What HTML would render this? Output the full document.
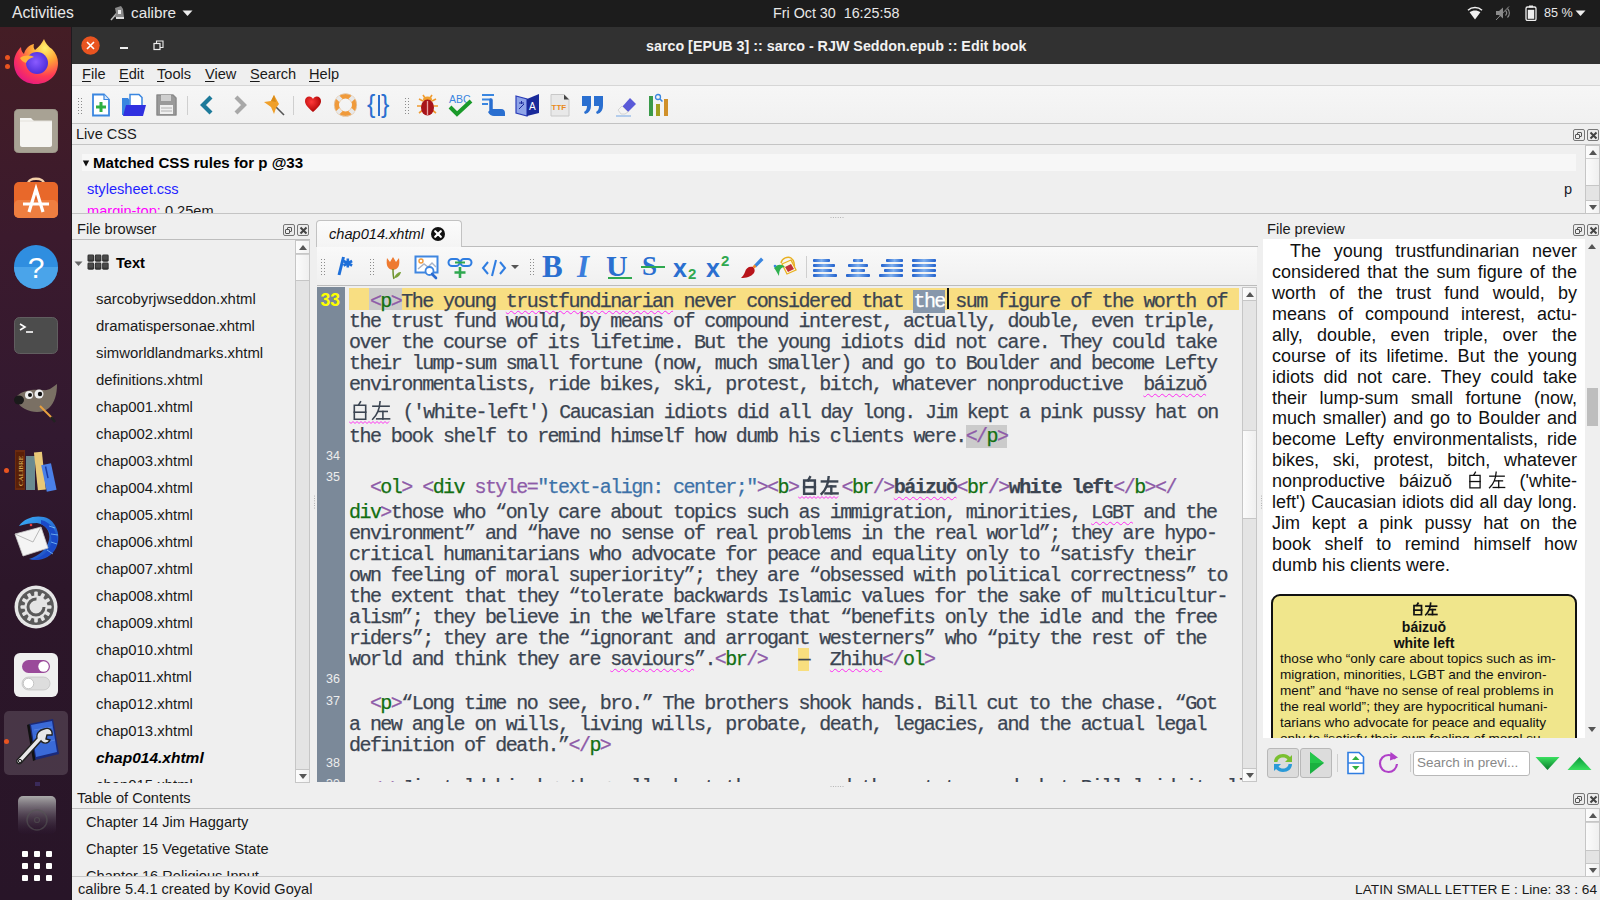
<!DOCTYPE html>
<html><head><meta charset="utf-8">
<style>
*{margin:0;padding:0;box-sizing:border-box}
html,body{width:1600px;height:900px;overflow:hidden;background:#efefef;font-family:"Liberation Sans",sans-serif;color:#1a1a1a}
.a{position:absolute}
.t{position:absolute;white-space:pre;line-height:1}
#topbar{left:0;top:0;width:1600px;height:27px;background:#1c1c1c;color:#e8e8e8}
#dock{left:0;top:27px;width:72px;height:873px;background:linear-gradient(180deg,#441d25 0%,#3b1a2d 24%,#321930 47%,#2c1629 64%,#281528 100%);border-right:1px solid #1f1a1f}
#title{left:72px;top:27px;width:1528px;height:37px;background:#313131;color:#f2f2f2}
#menu{left:72px;top:64px;width:1528px;height:21px;background:#efefef;font-size:14.6px}
#tb{left:72px;top:85px;width:1528px;height:39px;background:linear-gradient(#f6f6f6,#f1f1f1);border-top:1px solid #d6d6d6;border-bottom:1px solid #c2c2c2}
.ui{font-size:14.6px;color:#1a1a1a}
.fl{font-size:14.9px}
.hline{position:absolute;height:1px;background:#c4c4c4}
.vline{position:absolute;width:1px;background:#c4c4c4}
.mono{font-family:"Liberation Mono",monospace}
.vs{background:#e4e4e4;border:1px solid #c6c6c6}
.vsb{background:linear-gradient(90deg,#fdfdfd,#f1f1f1);border-bottom:1px solid #c6c6c6}
.vsb+.vsl{}
.vsl{background:linear-gradient(90deg,#fbfbfb,#efefef);border-top:1px solid #d0d0d0;border-bottom:1px solid #c6c6c6}
.tri{position:absolute;left:2.5px;width:0;height:0;border-left:4px solid transparent;border-right:4px solid transparent}
.tri.up{top:4px;border-bottom:5px solid #555}
.tri.dn{top:4px;border-top:5px solid #555}
.dbtn{position:absolute;width:12px;height:12px;border:1px solid #777;border-radius:2px;background:#ececec}
.ed{font-size:20px;letter-spacing:-1.55px;-webkit-text-stroke-width:0.25px;color:#3b4451;line-height:21px}
.sel{background:#8797ab;color:#fff}
.cjk{font-family:"Liberation Sans",sans-serif}
.pv{font-family:"Liberation Sans",sans-serif}
</style></head><body>

<div id="topbar" class="a">
  <div class="t" style="left:12px;top:5px;font-size:15.7px">Activities</div>
  <div class="t" style="left:131px;top:5px;font-size:15.3px">calibre</div>
  <div class="t" style="left:773px;top:6px;font-size:14.3px">Fri Oct 30  16:25:58</div>
  <div class="t" style="left:1544px;top:7px;font-size:12.6px">85 %</div>
</div>
<div id="dock" class="a"></div>
<svg class="a" style="left:110px;top:5px" width="15" height="16" viewBox="0 0 15 16"><path d="M1 15 L7 8" stroke="#bbb" stroke-width="1.6"/><path d="M5 3 L11 1 L13 4 L14 12 L10 14 L5 12 L6 8Z" fill="#8a8a8a"/><path d="M8 5 h3 v4 h-3z" fill="#eee"/><path d="M6 12 h8 v2 h-8z" fill="#ddd"/></svg>
<svg class="a" style="left:182px;top:10px" width="11" height="7" viewBox="0 0 11 7"><path d="M0.5 0.5 H10.5 L5.5 6Z" fill="#eee"/></svg>
<svg class="a" style="left:1467px;top:6px" width="16" height="14" viewBox="0 0 16 14"><path d="M8 13.5 L2.6 6.2 C5.8 3.8 10.2 3.8 13.4 6.2Z" fill="#f0f0f0"/><path d="M1 4.2 C4.8 0.6 11.2 0.6 15 4.2" fill="none" stroke="#f0f0f0" stroke-width="1.5"/></svg>
<svg class="a" style="left:1495px;top:6px" width="16" height="14" viewBox="0 0 16 14"><path d="M1 5 H4 L8 1.5 V12.5 L4 9 H1Z" fill="#8a8a8a"/><path d="M10.5 4.5 C12 6 12 8 10.5 9.5 M12.5 2.5 C15 5 15 9 12.5 11.5" stroke="#8a8a8a" stroke-width="1.1" fill="none"/><path d="M1 14 L14 0.5" stroke="#8a8a8a" stroke-width="1"/></svg>
<svg class="a" style="left:1525px;top:5px" width="12" height="16" viewBox="0 0 12 16"><rect x="4" y="0.5" width="4" height="2" fill="#eee"/><rect x="1" y="2" width="10" height="13.5" rx="1.5" fill="none" stroke="#eee" stroke-width="1.3"/><rect x="2.8" y="4.8" width="6.4" height="9" fill="#eee"/></svg>
<svg class="a" style="left:1575px;top:10px" width="11" height="7" viewBox="0 0 11 7"><path d="M0.5 0.5 H10.5 L5.5 6Z" fill="#eee"/></svg>
<svg class="a" style="left:12px;top:38px" width="48" height="48" viewBox="0 0 48 48"><defs><radialGradient id="ff1" cx="0.7" cy="0.2" r="0.9"><stop offset="0" stop-color="#fff36e"/><stop offset="0.35" stop-color="#ffa436"/><stop offset="0.7" stop-color="#ff3a55"/><stop offset="1" stop-color="#e31587"/></radialGradient><radialGradient id="ff2" cx="0.45" cy="0.45" r="0.6"><stop offset="0" stop-color="#8a5bff"/><stop offset="1" stop-color="#4a2ad8"/></radialGradient></defs>
<path d="M24 46 C11 46 2 37 2 25 C2 18 5 13 9 9 C9 13 11 15 12 16 C13 11 17 7 22 6 C21 9 22 11 23 12 C27 9 30 5 32 1 C34 6 36 8 40 11 C44 15 46 20 46 25 C46 37 37 46 24 46Z" fill="url(#ff1)"/>
<circle cx="25" cy="25" r="11" fill="url(#ff2)"/>
<path d="M8 20 C12 17 18 17 22 19 C18 20 15 22 14 25 C11 24 9 22 8 20Z" fill="#ffb03a"/></svg>
<div class="a" style="left:5px;top:55px;width:5px;height:5px;border-radius:50%;background:#e95420"></div>
<div class="a" style="left:5px;top:64px;width:5px;height:5px;border-radius:50%;background:#e95420"></div>
<svg class="a" style="left:14px;top:109px" width="44" height="44" viewBox="0 0 44 44"><rect x="0" y="0" width="44" height="44" rx="5" fill="#a8a294"/><rect x="0" y="0" width="44" height="44" rx="5" fill="none" stroke="#8f8a7e" stroke-width="0.8"/><path d="M6 9 H17 L20 12 H38 V36 C38 37 37 38 36 38 H8 C7 38 6 37 6 36Z" fill="#f6f5f2"/><path d="M6 12 H38" stroke="#e4e2dc" stroke-width="1"/></svg>
<svg class="a" style="left:14px;top:174px" width="44" height="44" viewBox="0 0 44 44"><path d="M14 10 C14 3 30 3 30 10" fill="none" stroke="#f4d0a8" stroke-width="2.5"/><rect x="0" y="8" width="44" height="36" rx="5" fill="#e8682a"/><rect x="0" y="26" width="44" height="18" rx="5" fill="#ee7e40"/><path d="M15 38 L22 15 L29 38" fill="none" stroke="#fff" stroke-width="3.2"/><path d="M9 30 H35" stroke="#fff" stroke-width="3"/></svg>
<svg class="a" style="left:14px;top:245px" width="44" height="44" viewBox="0 0 44 44"><circle cx="22" cy="22" r="22" fill="#2f8ee0"/><path d="M0 22 A22 22 0 0 0 44 22Z" fill="#4aa4ea"/><text x="22" y="33" text-anchor="middle" font-family="Liberation Sans" font-size="30" fill="#fff">?</text></svg>
<svg class="a" style="left:14px;top:317px" width="44" height="37" viewBox="0 0 44 37"><rect x="0.5" y="0.5" width="43" height="36" rx="5" fill="#4c4c4c" stroke="#6a6a6a" stroke-width="0.8"/><path d="M6 7 L11 10 L6 13" fill="none" stroke="#fff" stroke-width="1.6"/><path d="M12 15 H19" stroke="#fff" stroke-width="1.6"/></svg>
<svg class="a" style="left:13px;top:382px" width="46" height="42" viewBox="0 0 46 42"><path d="M4 14 C10 8 20 7 30 8 C36 9 40 5 44 2 C44 12 42 20 36 26 C30 31 20 31 12 27 C6 24 3 19 4 14Z" fill="#7a7064"/><ellipse cx="6" cy="18" rx="5" ry="4.5" fill="#1a1a1a"/><circle cx="16" cy="13" r="4" fill="#eee"/><circle cx="26" cy="12" r="4.5" fill="#eee"/><circle cx="17" cy="13" r="2" fill="#111"/><circle cx="27" cy="12" r="2.2" fill="#111"/><path d="M27 24 L39 36" stroke="#e8a040" stroke-width="2"/><path d="M38 35 L42 40" stroke="#222" stroke-width="2.5"/></svg>
<svg class="a" style="left:14px;top:448px" width="46" height="46" viewBox="0 0 46 46"><rect x="1" y="2" width="10" height="40" fill="#6a2a10"/><rect x="2" y="4" width="8" height="36" fill="#5a2008"/><text x="8.5" y="38" transform="rotate(-90 8.5 38)" font-family="Liberation Serif" font-size="7" fill="#e8c060">CALIBRE</text><rect x="12" y="8" width="9" height="34" fill="#6a8a90"/><rect x="22" y="4" width="8" height="38" fill="#e8c878" transform="rotate(-6 26 24)"/><rect x="30" y="16" width="10" height="27" fill="#4a80e8" transform="rotate(-12 35 30)"/><path d="M34 18 V30" stroke="#1a3aa0" stroke-width="1.5" transform="rotate(-12 35 30)"/></svg>
<div class="a" style="left:4px;top:468px;width:5px;height:5px;border-radius:50%;background:#e95420"></div>
<svg class="a" style="left:11px;top:514px" width="50" height="50" viewBox="0 0 50 50"><defs><linearGradient id="tb1" x1="0" y1="0" x2="1" y2="1"><stop offset="0" stop-color="#3ab0f8"/><stop offset="1" stop-color="#1a3ab8"/></linearGradient></defs>
<path d="M8 12 C14 3 28 0 38 5 C47 11 50 24 45 34 C40 44 28 48 18 45 C28 42 36 35 38 26 C40 17 34 10 26 9 C20 9 14 10 8 12Z" fill="url(#tb1)"/><path d="M30 10 C38 14 42 22 40 30 C38 38 30 44 20 46 C32 47 44 40 46 28 C47 18 40 8 30 6Z" fill="#1a4ac8"/><path d="M38 12 L44 14 M40 20 L47 21 M40 28 L46 30 M36 36 L42 40" stroke="#8ad0ff" stroke-width="1" opacity="0.7"/>
<path d="M4 20 L30 13 L37 34 L12 42 Z" fill="#f4f4f4" stroke="#c8c8c8" stroke-width="0.8"/>
<path d="M4 20 L22 28 L30 13" fill="none" stroke="#b8b8b8" stroke-width="1"/>
<circle cx="20" cy="11" r="1.3" fill="#e83a3a"/></svg>
<svg class="a" style="left:14px;top:585px" width="44" height="44" viewBox="0 0 44 44"><circle cx="22" cy="22" r="21.5" fill="#e6e6e6"/><circle cx="22" cy="22" r="18" fill="#5a5a5a"/><rect x="20.2" y="6.5" width="3.6" height="5" rx="1" fill="#e4e4e4" transform="rotate(0 22 22)"/><rect x="20.2" y="6.5" width="3.6" height="5" rx="1" fill="#e4e4e4" transform="rotate(30 22 22)"/><rect x="20.2" y="6.5" width="3.6" height="5" rx="1" fill="#e4e4e4" transform="rotate(60 22 22)"/><rect x="20.2" y="6.5" width="3.6" height="5" rx="1" fill="#e4e4e4" transform="rotate(90 22 22)"/><rect x="20.2" y="6.5" width="3.6" height="5" rx="1" fill="#e4e4e4" transform="rotate(120 22 22)"/><rect x="20.2" y="6.5" width="3.6" height="5" rx="1" fill="#e4e4e4" transform="rotate(150 22 22)"/><rect x="20.2" y="6.5" width="3.6" height="5" rx="1" fill="#e4e4e4" transform="rotate(180 22 22)"/><rect x="20.2" y="6.5" width="3.6" height="5" rx="1" fill="#e4e4e4" transform="rotate(210 22 22)"/><rect x="20.2" y="6.5" width="3.6" height="5" rx="1" fill="#e4e4e4" transform="rotate(240 22 22)"/><rect x="20.2" y="6.5" width="3.6" height="5" rx="1" fill="#e4e4e4" transform="rotate(270 22 22)"/><rect x="20.2" y="6.5" width="3.6" height="5" rx="1" fill="#e4e4e4" transform="rotate(300 22 22)"/><rect x="20.2" y="6.5" width="3.6" height="5" rx="1" fill="#e4e4e4" transform="rotate(330 22 22)"/><circle cx="22" cy="22" r="11.5" fill="#e4e4e4"/><circle cx="22" cy="22" r="8" fill="none" stroke="#5a5a5a" stroke-width="3" stroke-dasharray="38 12"/><circle cx="22" cy="22" r="3.5" fill="#e4e4e4"/></svg>
<svg class="a" style="left:14px;top:653px" width="44" height="44" viewBox="0 0 44 44"><rect x="0" y="0" width="44" height="44" rx="6" fill="#f0f0f0"/><rect x="8" y="7" width="28" height="13" rx="6.5" fill="#9a4a9a"/><circle cx="29.5" cy="13.5" r="5.2" fill="#fff"/><rect x="8" y="24" width="28" height="13" rx="6.5" fill="#ddd" stroke="#bbb" stroke-width="0.6"/><circle cx="14.5" cy="30.5" r="5.2" fill="#fff" stroke="#aaa" stroke-width="0.6"/></svg>
<div class="a" style="left:4px;top:711px;width:64px;height:64px;border-radius:5px;background:rgba(255,255,255,0.14)"></div>
<svg class="a" style="left:12px;top:718px" width="48" height="52" viewBox="0 0 48 52"><path d="M17 6 L41 1 L47 36 L23 42Z" fill="#1a2a7a"/><path d="M19 7 L40 3 L45 34 L24 39Z" fill="#3a6ad8"/><path d="M22 12 L40 9 M23 18 L41 15 M30 25 L43 22" stroke="#8ab0f0" stroke-width="0.6" opacity="0.6"/><path d="M15 7 L17.5 6 L23.5 42 L21 43Z" fill="#111"/><path d="M32 11 C37 9 41 12 40 17 L35 17 L34 21 L38 22 C36 26 31 26 29 23 L10 44 C8 47 4 46 5 42 L25 20 C24 16 27 12 32 11Z" fill="#e8e8e8" stroke="#222" stroke-width="1.4"/><circle cx="8" cy="43" r="1.6" fill="none" stroke="#222" stroke-width="1"/></svg>
<div class="a" style="left:4px;top:739px;width:5px;height:5px;border-radius:50%;background:#e95420"></div>
<div class="a" style="left:35px;top:782px;width:5px;height:4px;background:#3a2a5a"></div>
<svg class="a" style="left:18px;top:796px" width="38" height="38" viewBox="0 0 38 38"><defs><linearGradient id="dg" x1="0" y1="0" x2="0" y2="1"><stop offset="0" stop-color="#aaa"/><stop offset="1" stop-color="#2a1530" stop-opacity="0.2"/></linearGradient></defs><rect x="0" y="0" width="38" height="38" rx="5" fill="url(#dg)"/><circle cx="19" cy="24" r="10" fill="none" stroke="#555" stroke-width="1.5" opacity="0.6"/><circle cx="19" cy="24" r="2.5" fill="none" stroke="#555" stroke-width="1.2" opacity="0.6"/></svg>
<svg class="a" style="left:22px;top:851px" width="30" height="30" viewBox="0 0 30 30"><rect x="0" y="0" width="6" height="6" rx="1" fill="#fff"/><rect x="12" y="0" width="6" height="6" rx="1" fill="#fff"/><rect x="24" y="0" width="6" height="6" rx="1" fill="#fff"/><rect x="0" y="12" width="6" height="6" rx="1" fill="#fff"/><rect x="12" y="12" width="6" height="6" rx="1" fill="#fff"/><rect x="24" y="12" width="6" height="6" rx="1" fill="#fff"/><rect x="0" y="24" width="6" height="6" rx="1" fill="#fff"/><rect x="12" y="24" width="6" height="6" rx="1" fill="#fff"/><rect x="24" y="24" width="6" height="6" rx="1" fill="#fff"/></svg>
<div id="title" class="a">
    <div class="t" style="left:574px;top:12px;font-size:14.3px;font-weight:bold">sarco [EPUB 3] :: sarco - RJW Seddon.epub :: Edit book</div>
</div>
<svg class="a" style="left:81px;top:36px" width="19" height="19" viewBox="0 0 19 19"><circle cx="9.5" cy="9.5" r="9.2" fill="#e95420"/><path d="M6 6 L13 13 M13 6 L6 13" stroke="#fff" stroke-width="1.6"/></svg>
<div class="a" style="left:120px;top:47px;width:8px;height:1.5px;background:#eee"></div>
<svg class="a" style="left:153px;top:40px" width="11" height="11" viewBox="0 0 11 11"><rect x="1" y="3.5" width="6" height="6" fill="none" stroke="#eee" stroke-width="1.2"/><path d="M3.5 3.5 V1 H10 V7.5 H7" fill="none" stroke="#eee" stroke-width="1.1"/></svg>
<div id="menu" class="a">
  <div class="t" style="left:10px;top:3px"><u style="text-decoration-thickness:1px;text-underline-offset:2px">F</u>ile</div>
  <div class="t" style="left:47px;top:3px"><u style="text-decoration-thickness:1px;text-underline-offset:2px">E</u>dit</div>
  <div class="t" style="left:85px;top:3px"><u style="text-decoration-thickness:1px;text-underline-offset:2px">T</u>ools</div>
  <div class="t" style="left:133px;top:3px"><u style="text-decoration-thickness:1px;text-underline-offset:2px">V</u>iew</div>
  <div class="t" style="left:178px;top:3px"><u style="text-decoration-thickness:1px;text-underline-offset:2px">S</u>earch</div>
  <div class="t" style="left:237px;top:3px"><u style="text-decoration-thickness:1px;text-underline-offset:2px">H</u>elp</div>
</div>
<div id="tb" class="a"></div>
<svg class="a" style="left:77px;top:95px" width="5" height="22" viewBox="0 0 5 22"><rect x="1" y="3" width="1" height="1" fill="#8c8c8c"/><rect x="1" y="6" width="1" height="1" fill="#8c8c8c"/><rect x="1" y="9" width="1" height="1" fill="#8c8c8c"/><rect x="1" y="12" width="1" height="1" fill="#8c8c8c"/><rect x="1" y="15" width="1" height="1" fill="#8c8c8c"/><rect x="1" y="18" width="1" height="1" fill="#8c8c8c"/><rect x="4" y="3" width="1" height="1" fill="#8c8c8c"/><rect x="4" y="6" width="1" height="1" fill="#8c8c8c"/><rect x="4" y="9" width="1" height="1" fill="#8c8c8c"/><rect x="4" y="12" width="1" height="1" fill="#8c8c8c"/><rect x="4" y="15" width="1" height="1" fill="#8c8c8c"/><rect x="4" y="18" width="1" height="1" fill="#8c8c8c"/></svg>
<svg class="a" style="left:91px;top:93px" width="20" height="24" viewBox="0 0 20 24"><path d="M2 1.5 H13 L18 6.5 V22.5 H2Z" fill="#fff" stroke="#3a86e0" stroke-width="1.8"/><path d="M13 1.5 V6.5 H18" fill="#d8e8fb" stroke="#3a86e0" stroke-width="1.2"/><path d="M10 9v10M5 14h10" stroke="#2fb040" stroke-width="3"/></svg>
<svg class="a" style="left:121px;top:93px" width="26" height="24" viewBox="0 0 26 24"><path d="M9 1.5 H18 L21 4.5 V17 H9Z" fill="#fff" stroke="#3a86e0" stroke-width="1.5"/><path d="M1 5 H7 L8.5 7 V22 H1Z" fill="#3a86e0"/><path d="M5 12 H25 L22 23 H2Z" fill="#3030e0"/></svg>
<svg class="a" style="left:155px;top:93px" width="23" height="24" viewBox="0 0 23 24"><path d="M2 2 H18 L21 5 V22 H2Z" fill="#9a9a9a" stroke="#8a8a8a" stroke-width="1.5" stroke-linejoin="round"/><rect x="6" y="2" width="10" height="6" fill="#cfcfcf"/><rect x="5" y="12" width="13" height="9" fill="#efefef"/><path d="M6 15h11M6 18h11" stroke="#b0b0b0" stroke-width="1"/></svg>
<div class="a" style="left:187px;top:96px;width:1px;height:19px;background:#cfcfcf"></div>
<svg class="a" style="left:198px;top:95px" width="18" height="20" viewBox="0 0 18 20"><path d="M13 2 L5 10 L13 18" fill="none" stroke="#1d7a9a" stroke-width="4.2" stroke-linejoin="miter"/></svg>
<svg class="a" style="left:231px;top:95px" width="18" height="20" viewBox="0 0 18 20"><path d="M5 2 L13 10 L5 18" fill="none" stroke="#a8a8a8" stroke-width="4.2"/></svg>
<svg class="a" style="left:262px;top:93px" width="24" height="24" viewBox="0 0 24 24"><path d="M13 13 L22 22" stroke="#555" stroke-width="1.6"/><path d="M2 9 L9 8 L12 2 L17 11 L14 15 L12 21 L9 14Z" fill="#f0a02a"/><path d="M9 8 L12 2 L14 9Z" fill="#d88a1a"/></svg>
<div class="a" style="left:293px;top:96px;width:1px;height:19px;background:#cfcfcf"></div>
<svg class="a" style="left:304px;top:95px" width="18" height="20" viewBox="0 0 18 20"><defs><radialGradient id="hg" cx="0.4" cy="0.35" r="0.7"><stop offset="0" stop-color="#ff3a3a"/><stop offset="1" stop-color="#a80000"/></radialGradient></defs><path d="M9 17 C3 12 1 9 1 6 C1 3 3 1.5 5.2 1.5 C7 1.5 8.3 2.5 9 4 C9.7 2.5 11 1.5 12.8 1.5 C15 1.5 17 3 17 6 C17 9 15 12 9 17Z" fill="url(#hg)"/></svg>
<svg class="a" style="left:333px;top:93px" width="25" height="24" viewBox="0 0 25 24"><circle cx="12.5" cy="12" r="9" fill="none" stroke="#f09a3a" stroke-width="5"/><path d="M12.5 0.5v5M12.5 18.5v5M1 12h5M19 12h5" stroke="#e8e8e8" stroke-width="4.5" transform="rotate(45 12.5 12)"/><circle cx="12.5" cy="12" r="11.3" fill="none" stroke="#dcdcdc" stroke-width="0.6"/></svg>
<div class="t" style="left:367px;top:92px;font-size:25px;color:#2a6fd0;font-family:'Liberation Sans',sans-serif">{</div>
<div class="t" style="left:381px;top:92px;font-size:25px;color:#2a6fd0;font-family:'Liberation Sans',sans-serif">}</div>
<div class="a" style="left:377.5px;top:95px;width:2px;height:21px;background:#2a6fd0"></div>
<svg class="a" style="left:404px;top:95px" width="5" height="22" viewBox="0 0 5 22"><rect x="1" y="3" width="1" height="1" fill="#8c8c8c"/><rect x="1" y="6" width="1" height="1" fill="#8c8c8c"/><rect x="1" y="9" width="1" height="1" fill="#8c8c8c"/><rect x="1" y="12" width="1" height="1" fill="#8c8c8c"/><rect x="1" y="15" width="1" height="1" fill="#8c8c8c"/><rect x="1" y="18" width="1" height="1" fill="#8c8c8c"/><rect x="4" y="3" width="1" height="1" fill="#8c8c8c"/><rect x="4" y="6" width="1" height="1" fill="#8c8c8c"/><rect x="4" y="9" width="1" height="1" fill="#8c8c8c"/><rect x="4" y="12" width="1" height="1" fill="#8c8c8c"/><rect x="4" y="15" width="1" height="1" fill="#8c8c8c"/><rect x="4" y="18" width="1" height="1" fill="#8c8c8c"/></svg>
<svg class="a" style="left:414px;top:93px" width="27" height="24" viewBox="0 0 27 24"><path d="M5 6 L9 8 M22 6 L18 8 M3 13 H8 M24 13 H19 M5 20 L9 17 M22 20 L18 17 M9 2 L11 5 M18 2 L16 5" stroke="#f09a30" stroke-width="1.6"/><ellipse cx="13.5" cy="6.5" rx="4.5" ry="3" fill="#f0a030"/><ellipse cx="13.5" cy="14.5" rx="6.5" ry="8" fill="#a8141a"/><path d="M13.5 8 V22" stroke="#e8a0a0" stroke-width="1.3"/></svg>
<svg class="a" style="left:447px;top:93px" width="27" height="24" viewBox="0 0 27 24"><text x="2" y="10" font-family="Liberation Sans" font-size="10.5" fill="#3a86e0">ABC</text><path d="M3 14 L10 21 L24 8" fill="none" stroke="#1a9a2a" stroke-width="4"/></svg>
<svg class="a" style="left:480px;top:93px" width="27" height="24" viewBox="0 0 27 24"><path d="M2 2h12M2 6.5h9M2 11h6" stroke="#3a86e0" stroke-width="2"/><path d="M11 7 V16 H21 C24 16 25 18 25 20 V23 H14 Q10 23 8 19 L11 16" fill="#2a6fd0"/><path d="M11 7 V17" stroke="#2a6fd0" stroke-width="3.5" stroke-linecap="round"/></svg>
<svg class="a" style="left:515px;top:93px" width="25" height="24" viewBox="0 0 25 24"><path d="M1 3 L12 6 V23 L1 20Z" fill="#8fa4e8" stroke="#2a3cb8" stroke-width="1.2"/><path d="M12 6 L24 1 V20 L12 23Z" fill="#1a2a9a"/><text x="14" y="17" font-family="Liberation Sans" font-size="10" fill="#fff">A</text><path d="M4 10h5M6.5 8v3M4 16l5-5" stroke="#1a2a9a" stroke-width="1"/></svg>
<svg class="a" style="left:549px;top:93px" width="23" height="24" viewBox="0 0 23 24"><path d="M2 1.5 H15 L20 6.5 V23 H2Z" fill="#e8e8e8" stroke="#c8c8c8" stroke-width="1"/><path d="M15 1.5 L20 6.5 H15Z" fill="#444"/><text x="2.5" y="17" font-family="Liberation Sans" font-weight="bold" font-size="8" fill="#e88a20">TTF</text></svg>
<svg class="a" style="left:580px;top:94px" width="26" height="22" viewBox="0 0 26 22"><path d="M2 2 H11 V11 C11 16 9 19 5 20 L4 18 C6 17 7 15 7 12 H2Z" fill="#2a6fd0"/><path d="M14 2 H23 V11 C23 16 21 19 17 20 L16 18 C18 17 19 15 19 12 H14Z" fill="#2a6fd0"/></svg>
<svg class="a" style="left:614px;top:93px" width="24" height="24" viewBox="0 0 24 24"><path d="M8 14 L16 5 L22 11 L14 19Z" fill="#5a5ad8"/><path d="M4 17 L8 13 L14 19 L11 21 H7Z" fill="#f4f4f4" stroke="#ccc" stroke-width="0.8"/><path d="M2 23h15" stroke="#8ab4e8" stroke-width="1.2"/></svg>
<svg class="a" style="left:648px;top:93px" width="23" height="24" viewBox="0 0 23 24"><rect x="1" y="3" width="4" height="20" fill="#3a9a4a"/><rect x="8" y="11" width="4" height="12" fill="#a0a020"/><rect x="16" y="6" width="4" height="17" fill="#d0902a"/><circle cx="10" cy="4" r="2.5" fill="none" stroke="#3a86e0" stroke-width="1.3"/><path d="M12 6 L14.5 8.5" stroke="#3a86e0" stroke-width="1.5"/></svg>
<div class="a" style="left:72px;top:123px;width:1528px;height:91px">
  <div class="t ui" style="left:4px;top:4px">Live CSS</div>
  <div class="hline" style="left:0;top:21px;width:1528px"></div>
  <div class="a" style="left:10px;top:31px;width:1494px;height:17px;background:#f7f7f7"></div>
  <svg class="a" style="left:10px;top:37px" width="8" height="7"><path d="M0.8 0.5H7.2L4 6.5Z" fill="#111"/></svg>
  <div class="t" style="left:21px;top:32px;font-size:15.1px;font-weight:bold;color:#000">Matched CSS rules for p @33</div>
  <div class="t" style="left:15px;top:59px;font-size:14.6px;color:#1f1fff">stylesheet.css</div>
  <div class="t" style="left:1492px;top:59px;font-size:14.6px;color:#1a1a2a">p</div>
  <div class="a" style="left:0;top:78px;width:1500px;height:12px;overflow:hidden"><div class="t" style="left:15px;top:3px;font-size:14.6px;color:#ff00ff">margin-top: <span style="color:#1a1a1a">0.25em</span></div></div>
  <div class="hline" style="left:0;top:90px;width:1528px"></div>
</div>

<div class="a" style="left:72px;top:214px;width:238px;height:569px">
  <div class="t ui" style="left:5px;top:8px">File browser</div>
  <div class="a dbtn" style="left:211px;top:10px"><div class="a" style="left:3px;top:2px;width:5px;height:5px;border:1px solid #555;border-radius:1px"></div><div class="a" style="left:1px;top:4px;width:5px;height:5px;border:1px solid #555;background:#efefef;border-radius:1px"></div></div>
<div class="a dbtn" style="left:225px;top:10px"><svg class="a" style="left:1px;top:1px" width="9" height="9"><path d="M1.5 1.5L7.5 7.5M7.5 1.5L1.5 7.5" stroke="#444" stroke-width="2"/></svg></div>
  <div class="hline" style="left:0;top:25px;width:238px;background:#bdbdbd"></div>
  <div class="a" style="left:0;top:26px;width:223px;height:543px;overflow:hidden">
  <svg class="a" style="left:2px;top:21px" width="9" height="6"><path d="M0.5 0.5H8.5L4.5 5Z" fill="#666"/></svg>
  <svg class="a" style="left:15px;top:14px" width="23" height="17" viewBox="0 0 23 17"><rect x="0.5" y="0.5" width="6.6" height="7.2" rx="1.4" fill="#333"/><rect x="1.5" y="1.2" width="4.6" height="4.6" rx="0.8" fill="#4a4a4a"/><rect x="7.8" y="0.5" width="6.6" height="7.2" rx="1.4" fill="#333"/><rect x="8.8" y="1.2" width="4.6" height="4.6" rx="0.8" fill="#4a4a4a"/><rect x="15.1" y="0.5" width="6.6" height="7.2" rx="1.4" fill="#333"/><rect x="16.1" y="1.2" width="4.6" height="4.6" rx="0.8" fill="#4a4a4a"/><rect x="0.5" y="8.5" width="6.6" height="7.2" rx="1.4" fill="#333"/><rect x="1.5" y="9.2" width="4.6" height="4.6" rx="0.8" fill="#4a4a4a"/><rect x="7.8" y="8.5" width="6.6" height="7.2" rx="1.4" fill="#333"/><rect x="8.8" y="9.2" width="4.6" height="4.6" rx="0.8" fill="#4a4a4a"/><rect x="15.1" y="8.5" width="6.6" height="7.2" rx="1.4" fill="#333"/><rect x="16.1" y="9.2" width="4.6" height="4.6" rx="0.8" fill="#4a4a4a"/></svg>
  <div class="t" style="left:44px;top:16px;font-size:14.6px;font-weight:bold;color:#000">Text</div>
  <div class="t ui fl" style="left:24px;top:52px">sarcobyrjwseddon.xhtml</div>
  <div class="t ui fl" style="left:24px;top:79px">dramatispersonae.xhtml</div>
  <div class="t ui fl" style="left:24px;top:106px">simworldlandmarks.xhtml</div>
  <div class="t ui fl" style="left:24px;top:133px">definitions.xhtml</div>
  <div class="t ui fl" style="left:24px;top:160px">chap001.xhtml</div>
  <div class="t ui fl" style="left:24px;top:187px">chap002.xhtml</div>
  <div class="t ui fl" style="left:24px;top:214px">chap003.xhtml</div>
  <div class="t ui fl" style="left:24px;top:241px">chap004.xhtml</div>
  <div class="t ui fl" style="left:24px;top:268px">chap005.xhtml</div>
  <div class="t ui fl" style="left:24px;top:295px">chap006.xhtml</div>
  <div class="t ui fl" style="left:24px;top:322px">chap007.xhtml</div>
  <div class="t ui fl" style="left:24px;top:349px">chap008.xhtml</div>
  <div class="t ui fl" style="left:24px;top:376px">chap009.xhtml</div>
  <div class="t ui fl" style="left:24px;top:403px">chap010.xhtml</div>
  <div class="t ui fl" style="left:24px;top:430px">chap011.xhtml</div>
  <div class="t ui fl" style="left:24px;top:457px">chap012.xhtml</div>
  <div class="t ui fl" style="left:24px;top:484px">chap013.xhtml</div>
  <div class="t ui fl" style="left:24px;top:510px;font-weight:bold;font-style:italic;color:#000;font-size:15.5px">chap014.xhtml</div>
  <div class="t ui fl" style="left:24px;top:538px">chap015.xhtml</div>
  </div>
  <div class="a vs" style="left:223px;top:26px;width:15px;height:543px">
<div class="a vsb" style="left:0;top:0;width:13px;height:13px"><div class="tri up"></div></div>
<div class="a vsl" style="left:0;top:13px;width:13px;height:27px"></div>
<div class="a vsb" style="left:0;top:528px;width:13px;height:13px;border-bottom:none;border-top:1px solid #c6c6c6"><div class="tri dn"></div></div>
</div>
</div>

<!-- EDITOR -->
<div class="a vs" style="left:1585px;top:145px;width:15px;height:69px">
<div class="a vsb" style="left:0;top:0;width:13px;height:13px"><div class="tri up"></div></div>
<div class="a vsl" style="left:0;top:12px;width:13px;height:28px"></div>
<div class="a vsb" style="left:0;top:54px;width:13px;height:13px;border-bottom:none;border-top:1px solid #c6c6c6"><div class="tri dn"></div></div>
</div>
<div class="a dbtn" style="left:1573px;top:129px"><div class="a" style="left:3px;top:2px;width:5px;height:5px;border:1px solid #555;border-radius:1px"></div><div class="a" style="left:1px;top:4px;width:5px;height:5px;border:1px solid #555;background:#efefef;border-radius:1px"></div></div>
<div class="a dbtn" style="left:1587px;top:129px"><svg class="a" style="left:1px;top:1px" width="9" height="9"><path d="M1.5 1.5L7.5 7.5M7.5 1.5L1.5 7.5" stroke="#444" stroke-width="2"/></svg></div>
<div class="a" style="left:316px;top:246px;width:942px;height:537px;border-top:1px solid #bdbdbd"></div>
<div class="a" style="left:316px;top:220px;width:146px;height:27px;background:linear-gradient(#fbfbfb,#f4f4f4);border:1px solid #c2c2c2;border-bottom:none;border-radius:4px 4px 0 0"></div>
<div class="t" style="left:329px;top:227px;font-size:14.6px;font-style:italic;color:#111">chap014.xhtml</div>
<svg class="a" style="left:430px;top:226px" width="16" height="16" viewBox="0 0 16 16"><circle cx="8" cy="8" r="7" fill="#111"/><path d="M5.2 5.2L10.8 10.8M10.8 5.2L5.2 10.8" stroke="#fff" stroke-width="2.2" stroke-linecap="round"/></svg>
<div class="a" style="left:317px;top:247px;width:940px;height:39px;background:linear-gradient(#f9f9f9,#f0f0f0);border-bottom:1px solid #bcbcbc"></div>
<svg class="a" style="left:320px;top:256px" width="5" height="22" viewBox="0 0 5 22"><rect x="1" y="3" width="1" height="1" fill="#8c8c8c"/><rect x="1" y="6" width="1" height="1" fill="#8c8c8c"/><rect x="1" y="9" width="1" height="1" fill="#8c8c8c"/><rect x="1" y="12" width="1" height="1" fill="#8c8c8c"/><rect x="1" y="15" width="1" height="1" fill="#8c8c8c"/><rect x="1" y="18" width="1" height="1" fill="#8c8c8c"/><rect x="4" y="3" width="1" height="1" fill="#8c8c8c"/><rect x="4" y="6" width="1" height="1" fill="#8c8c8c"/><rect x="4" y="9" width="1" height="1" fill="#8c8c8c"/><rect x="4" y="12" width="1" height="1" fill="#8c8c8c"/><rect x="4" y="15" width="1" height="1" fill="#8c8c8c"/><rect x="4" y="18" width="1" height="1" fill="#8c8c8c"/></svg>
<svg class="a" style="left:334px;top:255px" width="22" height="24" viewBox="0 0 22 24"><path d="M9.5 2L5 20" stroke="#1e6fd9" stroke-width="3"/><path d="M13.8 3.5v9M9.5 6l8.6 4.5M9.5 10.5l8.6-4.5" stroke="#1e6fd9" stroke-width="2.6"/></svg>
<svg class="a" style="left:369px;top:256px" width="5" height="22" viewBox="0 0 5 22"><rect x="1" y="3" width="1" height="1" fill="#8c8c8c"/><rect x="1" y="6" width="1" height="1" fill="#8c8c8c"/><rect x="1" y="9" width="1" height="1" fill="#8c8c8c"/><rect x="1" y="12" width="1" height="1" fill="#8c8c8c"/><rect x="1" y="15" width="1" height="1" fill="#8c8c8c"/><rect x="1" y="18" width="1" height="1" fill="#8c8c8c"/><rect x="4" y="3" width="1" height="1" fill="#8c8c8c"/><rect x="4" y="6" width="1" height="1" fill="#8c8c8c"/><rect x="4" y="9" width="1" height="1" fill="#8c8c8c"/><rect x="4" y="12" width="1" height="1" fill="#8c8c8c"/><rect x="4" y="15" width="1" height="1" fill="#8c8c8c"/><rect x="4" y="18" width="1" height="1" fill="#8c8c8c"/></svg>
<svg class="a" style="left:384px;top:255px" width="20" height="25" viewBox="0 0 20 25"><path d="M3 3 L6 7 L9 2 L12 7 L15 3 C16 10 15 14 9 15 C3 14 2 10 3 3Z" fill="#ee7a30"/><path d="M9 14 C9 18 9 21 10 24" stroke="#6a8f2a" stroke-width="1.5" fill="none"/><path d="M10 23 C12 18 15 17 17 17 C16 21 13 23 10 23Z" fill="#7aa03a"/></svg>
<svg class="a" style="left:414px;top:254px" width="26" height="26" viewBox="0 0 26 26"><rect x="1.5" y="2.5" width="22" height="16" fill="#fff" stroke="#3f86e0" stroke-width="2"/><circle cx="7" cy="7" r="2" fill="none" stroke="#f29a3a" stroke-width="1.4"/><path d="M4 15 L10 10 L14 13 L18 9 L22 13" stroke="#a8b4c8" stroke-width="1.4" fill="none"/><circle cx="15.5" cy="17" r="4" fill="#fff" stroke="#3f86e0" stroke-width="1.8"/><path d="M18 20 L22 24" stroke="#2a6ad0" stroke-width="2.6" stroke-linecap="round"/></svg>
<svg class="a" style="left:447px;top:256px" width="26" height="24" viewBox="0 0 26 24"><rect x="1.5" y="3" width="11" height="7" rx="3.5" fill="none" stroke="#2f7de1" stroke-width="2"/><rect x="13.5" y="3" width="11" height="7" rx="3.5" fill="none" stroke="#2f7de1" stroke-width="2"/><path d="M8 6.5h10" stroke="#2fa84f" stroke-width="2"/><path d="M13 11v11M7.5 16.5h11" stroke="#2fa84f" stroke-width="2.6"/></svg>
<svg class="a" style="left:481px;top:257px" width="26" height="22" viewBox="0 0 26 22"><path d="M7 5 L2 11 L7 17" stroke="#2f7de1" stroke-width="2" fill="none"/><path d="M19 5 L24 11 L19 17" stroke="#2f7de1" stroke-width="2" fill="none"/><path d="M15 3 L11 19" stroke="#2f7de1" stroke-width="2"/></svg>
<svg class="a" style="left:510px;top:264px" width="10" height="6" viewBox="0 0 10 6"><path d="M1 1h8L5 5Z" fill="#555"/></svg>
<svg class="a" style="left:529px;top:256px" width="5" height="22" viewBox="0 0 5 22"><rect x="1" y="3" width="1" height="1" fill="#8c8c8c"/><rect x="1" y="6" width="1" height="1" fill="#8c8c8c"/><rect x="1" y="9" width="1" height="1" fill="#8c8c8c"/><rect x="1" y="12" width="1" height="1" fill="#8c8c8c"/><rect x="1" y="15" width="1" height="1" fill="#8c8c8c"/><rect x="1" y="18" width="1" height="1" fill="#8c8c8c"/><rect x="4" y="3" width="1" height="1" fill="#8c8c8c"/><rect x="4" y="6" width="1" height="1" fill="#8c8c8c"/><rect x="4" y="9" width="1" height="1" fill="#8c8c8c"/><rect x="4" y="12" width="1" height="1" fill="#8c8c8c"/><rect x="4" y="15" width="1" height="1" fill="#8c8c8c"/><rect x="4" y="18" width="1" height="1" fill="#8c8c8c"/></svg>
<div class="t" style="left:542px;top:251px;font-family:'Liberation Serif',serif;font-weight:bold;font-size:31px;color:#2a6fd0">B</div>
<div class="t" style="left:577px;top:251px;font-family:'Liberation Serif',serif;font-style:italic;font-weight:bold;font-size:31px;color:#3a7ddc">I</div>
<div class="t" style="left:606px;top:251px;font-family:'Liberation Serif',serif;font-weight:bold;font-size:30px;color:#2a6fd0">U</div>
<div class="a" style="left:608px;top:277px;width:24px;height:2px;background:#2fa84f"></div>
<div class="t" style="left:642px;top:253px;font-family:'Liberation Serif',serif;font-weight:bold;font-size:27px;color:#2a6fd0">S</div>
<div class="a" style="left:641px;top:266px;width:24px;height:2px;background:#2fa84f"></div>
<div class="t" style="left:673px;top:256px;font-weight:bold;font-size:25px;color:#2a6fd0">x</div>
<div class="t" style="left:688px;top:266px;font-weight:bold;font-size:15px;color:#2fa84f">2</div>
<div class="t" style="left:706px;top:256px;font-weight:bold;font-size:25px;color:#2a6fd0">x</div>
<div class="t" style="left:721px;top:253px;font-weight:bold;font-size:15px;color:#2fa84f">2</div>
<svg class="a" style="left:740px;top:255px" width="24" height="24" viewBox="0 0 24 24"><path d="M14 10 L21 2.5 L23.5 5 L16 12.5Z" fill="#3a86e0"/><path d="M12.5 11.5 L14.5 9.5 L16.5 11.5 L14.5 13.5Z" fill="#f08a2a"/><path d="M13 12 C9 11 6 13 5 17 C4 20 2 22 1 23 C6 23 11 22 14 18 C15 16 15 14 13 12Z" fill="#b8141a"/></svg>
<svg class="a" style="left:772px;top:255px" width="26" height="25" viewBox="0 0 26 25"><path d="M9 8 C10 3 16 1 19 3 C22 5 23 10 22 13" fill="none" stroke="#e8b020" stroke-width="1.5"/><path d="M10 9 L19 5 L24 15 L15 19Z" fill="#fff7dd" stroke="#e8b020" stroke-width="1.3"/><path d="M13 12 L19 9 L22 14 L16 17Z" fill="#c0303a"/><path d="M2 13 C5 9 10 9 13 12 C9 12 7 15 7 21 C5 18 4 15 2 13Z" fill="#2fb04f"/><circle cx="3" cy="11" r="1.3" fill="#3a86e0"/></svg>
<div class="a" style="left:806px;top:256px;width:1px;height:22px;background:#cfcfcf"></div>
<svg class="a" style="left:813px;top:256px" width="25" height="24" viewBox="0 0 25 24"><defs><linearGradient id="al1" x1="0" y1="0" x2="1" y2="0"><stop offset="0" stop-color="#1f5fcc"/><stop offset="0.5" stop-color="#7fb0ee"/><stop offset="1" stop-color="#1f5fcc"/></linearGradient></defs><rect x="0" y="3" width="17" height="3" rx="1" fill="url(#al1)"/><rect x="0" y="8" width="22" height="3" rx="1" fill="url(#al1)"/><rect x="0" y="13" width="19" height="3" rx="1" fill="url(#al1)"/><rect x="0" y="18" width="24" height="3" rx="1" fill="url(#al1)"/></svg>
<svg class="a" style="left:846px;top:256px" width="25" height="24" viewBox="0 0 25 24"><defs><linearGradient id="al2" x1="0" y1="0" x2="1" y2="0"><stop offset="0" stop-color="#1f5fcc"/><stop offset="0.5" stop-color="#7fb0ee"/><stop offset="1" stop-color="#1f5fcc"/></linearGradient></defs><rect x="7" y="3" width="10" height="3" rx="1" fill="url(#al2)"/><rect x="2" y="8" width="20" height="3" rx="1" fill="url(#al2)"/><rect x="5" y="13" width="14" height="3" rx="1" fill="url(#al2)"/><rect x="0" y="18" width="24" height="3" rx="1" fill="url(#al2)"/></svg>
<svg class="a" style="left:879px;top:256px" width="25" height="24" viewBox="0 0 25 24"><defs><linearGradient id="al3" x1="0" y1="0" x2="1" y2="0"><stop offset="0" stop-color="#1f5fcc"/><stop offset="0.5" stop-color="#7fb0ee"/><stop offset="1" stop-color="#1f5fcc"/></linearGradient></defs><rect x="7" y="3" width="17" height="3" rx="1" fill="url(#al3)"/><rect x="2" y="8" width="22" height="3" rx="1" fill="url(#al3)"/><rect x="5" y="13" width="19" height="3" rx="1" fill="url(#al3)"/><rect x="0" y="18" width="24" height="3" rx="1" fill="url(#al3)"/></svg>
<svg class="a" style="left:912px;top:256px" width="25" height="24" viewBox="0 0 25 24"><defs><linearGradient id="al4" x1="0" y1="0" x2="1" y2="0"><stop offset="0" stop-color="#1f5fcc"/><stop offset="0.5" stop-color="#7fb0ee"/><stop offset="1" stop-color="#1f5fcc"/></linearGradient></defs><rect x="0" y="3" width="24" height="3" rx="1" fill="url(#al4)"/><rect x="0" y="8" width="24" height="3" rx="1" fill="url(#al4)"/><rect x="0" y="13" width="24" height="3" rx="1" fill="url(#al4)"/><rect x="0" y="18" width="24" height="3" rx="1" fill="url(#al4)"/></svg>
<div class="a" style="left:317px;top:287px;width:925px;height:495px;background:#efefef;overflow:hidden">
<div class="a" style="left:0;top:0;width:28px;height:495px;background:#7b8999"></div>
<div class="a" style="left:32px;top:1px;width:890px;height:22px;background:#f8de82"></div>
<div class="a" style="left:52px;top:1px;width:33px;height:22px;background:#cbcbcb"></div>
<div class="a" style="left:630px;top:1px;width:1.6px;height:21px;background:#111"></div>
</div>
<div class="a" style="left:317px;top:287px;width:925px;height:495px;overflow:hidden">
<div class="t mono ed" style="left:32px;top:4.1px;">  <span style="color:#8e5ba8">&lt;</span><span style="color:#137013">p</span><span style="color:#8e5ba8">&gt;</span>The young <span style="text-decoration:underline wavy #ff2cf0;text-decoration-thickness:1px;text-underline-offset:3px">trustfundinarian</span> never considered that <span class="sel">the</span> sum figure of the worth of</div>

<div class="t mono ed" style="left:32px;top:24.2px;">the trust fund would, by means of compound interest, actually, double, even triple,</div>

<div class="t mono ed" style="left:32px;top:45.3px;">over the course of its lifetime. But the young idiots did not care. They could take</div>

<div class="t mono ed" style="left:32px;top:66.4px;">their lump-sum small fortune (now, much smaller) and go to Boulder and become Lefty</div>

<div class="t mono ed" style="left:32px;top:87.1px;">environmentalists, ride bikes, ski, protest, bitch, whatever nonproductive  <span style="text-decoration:underline wavy #ff2cf0;text-decoration-thickness:1px;text-underline-offset:3px">báizuǒ</span></div>

<div class="t mono ed" style="left:32px;top:112.6px;"><span style="position:relative;display:inline-block"><svg width="43" height="21" style="vertical-align:-3px;display:inline-block" viewBox="0 0 43 21"><g transform="translate(1.5,1.0) scale(0.95)" fill="none" stroke="#3b4451" stroke-width="1.68" stroke-linecap="square"><path d="M10.5 0.8 L8.5 4.2"/><path d="M4 4.5 H16 V19.2 H4 Z"/><path d="M4 11.8 H16"/></g><g transform="translate(22.5,1.0) scale(0.95)" fill="none" stroke="#3b4451" stroke-width="1.68" stroke-linecap="square"><path d="M1.5 5.5 H18.5"/><path d="M9 0.8 C8.5 9 6 14.5 1.2 19.2"/><path d="M7.5 11 H16.5"/><path d="M12 11 V18.8"/><path d="M5.5 18.8 H19"/></g></svg><svg class="a" style="left:0;top:21px" width="41" height="3"><polyline points="0.0,0.5 2.0,2.5 4.0,0.5 6.0,2.5 8.0,0.5 10.0,2.5 12.0,0.5 14.0,2.5 16.0,0.5 18.0,2.5 20.0,0.5 22.0,2.5 24.0,0.5 26.0,2.5 28.0,0.5 30.0,2.5 32.0,0.5 34.0,2.5 36.0,0.5 38.0,2.5 40.0,0.5" fill="none" stroke="#ff2cf0" stroke-width="1"/></svg></span> ('white-left') Caucasian idiots did all day long. Jim kept a pink pussy hat on</div>

<div class="t mono ed" style="left:32px;top:139.1px;">the book shelf to remind himself how dumb his clients were.<span style="background:#cbcbcb"><span style="color:#8e5ba8">&lt;/</span><span style="color:#137013">p</span><span style="color:#8e5ba8">&gt;</span></span></div>

<div class="t mono ed" style="left:32px;top:188.3px;">  <span style="color:#8e5ba8">&lt;</span><span style="color:#137013">ol</span><span style="color:#8e5ba8">&gt;</span> <span style="color:#8e5ba8">&lt;</span><span style="color:#137013">div</span> <span style="color:#8e5ba8">style=</span><span style="color:#3d72a8">"text-align: center;"</span><span style="color:#8e5ba8">&gt;</span><span style="color:#8e5ba8">&lt;</span><span style="color:#137013">b</span><span style="color:#8e5ba8">&gt;</span><span style="position:relative;display:inline-block"><svg width="43" height="21" style="vertical-align:-3px;display:inline-block" viewBox="0 0 43 21"><g transform="translate(2.5,1.5) scale(0.9)" fill="none" stroke="#3b4451" stroke-width="2.67" stroke-linecap="square"><path d="M10.5 0.8 L8.5 4.2"/><path d="M4 4.5 H16 V19.2 H4 Z"/><path d="M4 11.8 H16"/></g><g transform="translate(22.5,1.5) scale(0.9)" fill="none" stroke="#3b4451" stroke-width="2.67" stroke-linecap="square"><path d="M1.5 5.5 H18.5"/><path d="M9 0.8 C8.5 9 6 14.5 1.2 19.2"/><path d="M7.5 11 H16.5"/><path d="M12 11 V18.8"/><path d="M5.5 18.8 H19"/></g></svg><svg class="a" style="left:0;top:21px" width="41" height="3"><polyline points="0.0,0.5 2.0,2.5 4.0,0.5 6.0,2.5 8.0,0.5 10.0,2.5 12.0,0.5 14.0,2.5 16.0,0.5 18.0,2.5 20.0,0.5 22.0,2.5 24.0,0.5 26.0,2.5 28.0,0.5 30.0,2.5 32.0,0.5 34.0,2.5 36.0,0.5 38.0,2.5 40.0,0.5" fill="none" stroke="#ff2cf0" stroke-width="1"/></svg></span><span style="color:#8e5ba8">&lt;</span><span style="color:#137013">br</span><span style="color:#8e5ba8">/&gt;</span><b><span style="text-decoration:underline wavy #ff2cf0;text-decoration-thickness:1px;text-underline-offset:3px">báizuǒ</span></b><span style="color:#8e5ba8">&lt;</span><span style="color:#137013">br</span><span style="color:#8e5ba8">/&gt;</span><b>white left</b><span style="color:#8e5ba8">&lt;/</span><span style="color:#137013">b</span><span style="color:#8e5ba8">&gt;</span><span style="color:#8e5ba8">&lt;/</span></div>

<div class="t mono ed" style="left:32px;top:214.9px;"><span style="color:#137013">div</span><span style="color:#8e5ba8">&gt;</span>those who “only care about topics such as immigration, minorities, <span style="text-decoration:underline wavy #ff2cf0;text-decoration-thickness:1px;text-underline-offset:3px">LGBT</span> and the</div>

<div class="t mono ed" style="left:32px;top:235.8px;">environment” and “have no sense of real problems in the real world”; they are hypo-</div>

<div class="t mono ed" style="left:32px;top:257.1px;">critical humanitarians who advocate for peace and equality only to “satisfy their</div>

<div class="t mono ed" style="left:32px;top:278.1px;">own feeling of moral superiority”; they are “obsessed with political correctness” to</div>

<div class="t mono ed" style="left:32px;top:299.3px;">the extent that they “tolerate backwards Islamic values for the sake of multicultur-</div>

<div class="t mono ed" style="left:32px;top:320.1px;">alism”; they believe in the welfare state that “benefits only the idle and the free</div>

<div class="t mono ed" style="left:32px;top:341.4px;">riders”; they are the “ignorant and arrogant westerners” who “pity the rest of the</div>

<div class="t mono ed" style="left:32px;top:361.6px;">world and think they are <span style="text-decoration:underline wavy #ff2cf0;text-decoration-thickness:1px;text-underline-offset:3px">saviours</span>”.<span style="color:#8e5ba8">&lt;</span><span style="color:#137013">br</span><span style="color:#8e5ba8">/&gt;</span>   <span style="background:#f8de7e">—</span>  <span style="text-decoration:underline wavy #ff2cf0;text-decoration-thickness:1px;text-underline-offset:3px">Zhihu</span><span style="color:#8e5ba8">&lt;/</span><span style="color:#137013">ol</span><span style="color:#8e5ba8">&gt;</span></div>

<div class="t mono ed" style="left:32px;top:405.6px;">  <span style="color:#8e5ba8">&lt;</span><span style="color:#137013">p</span><span style="color:#8e5ba8">&gt;</span>“Long time no see, bro.” The brothers shook hands. Bill cut to the chase. “Got</div>

<div class="t mono ed" style="left:32px;top:427.1px;">a new angle on wills, living wills, probate, death, legacies, and the actual legal</div>

<div class="t mono ed" style="left:32px;top:447.6px;">definition of death.”<span style="color:#8e5ba8">&lt;/</span><span style="color:#137013">p</span><span style="color:#8e5ba8">&gt;</span></div>

<div class="t mono ed" style="left:32px;top:490.1px;">  <span style="color:#8e5ba8">&lt;</span><span style="color:#137013">p</span><span style="color:#8e5ba8">&gt;</span>Jim told his brother all about the case and the estate, and what Bill laid it all</div>

<div class="t" style="left:2px;top:5.2px;width:21px;text-align:right;font-size:17.5px;font-weight:bold;color:#ffff00">33</div>
<div class="t" style="left:3px;top:162.7px;width:20px;text-align:right;font-size:12.5px;color:#ededed">34</div>
<div class="t" style="left:3px;top:184.2px;width:20px;text-align:right;font-size:12.5px;color:#ededed">35</div>
<div class="t" style="left:3px;top:385.5px;width:20px;text-align:right;font-size:12.5px;color:#ededed">36</div>
<div class="t" style="left:3px;top:407.6px;width:20px;text-align:right;font-size:12.5px;color:#ededed">37</div>
<div class="t" style="left:3px;top:470.3px;width:20px;text-align:right;font-size:12.5px;color:#ededed">38</div>
<div class="t" style="left:3px;top:491.2px;width:20px;text-align:right;font-size:12.5px;color:#ededed">39</div>
</div>
<div class="a vs" style="left:1242px;top:287px;width:15px;height:495px">
<div class="a vsb" style="left:0;top:0;width:13px;height:13px"><div class="tri up"></div></div>
<div class="a vsl" style="left:0;top:142px;width:13px;height:89px"></div>
<div class="a vsb" style="left:0;top:480px;width:13px;height:13px;border-bottom:none;border-top:1px solid #c6c6c6"><div class="tri dn"></div></div>
</div>

<!-- PREVIEW -->
<div class="t ui" style="left:1267px;top:222px">File preview</div>
<div class="a dbtn" style="left:1573px;top:224px"><div class="a" style="left:3px;top:2px;width:5px;height:5px;border:1px solid #555;border-radius:1px"></div><div class="a" style="left:1px;top:4px;width:5px;height:5px;border:1px solid #555;background:#efefef;border-radius:1px"></div></div>
<div class="a dbtn" style="left:1587px;top:224px"><svg class="a" style="left:1px;top:1px" width="9" height="9"><path d="M1.5 1.5L7.5 7.5M7.5 1.5L1.5 7.5" stroke="#444" stroke-width="2"/></svg></div>
<div class="a" style="left:1263px;top:239px;width:322px;height:499px;background:#fff;overflow:hidden">
<div class="a pv" style="left:27px;top:2.0px;width:287px;font-size:18px;line-height:20px;color:#111;white-space:nowrap;text-align:justify;text-align-last:justify;">The young trustfundinarian never</div>
<div class="a pv" style="left:9px;top:22.899999999999977px;width:305px;font-size:18px;line-height:20px;color:#111;white-space:nowrap;text-align:justify;text-align-last:justify;">considered that the sum figure of the</div>
<div class="a pv" style="left:9px;top:43.89999999999998px;width:305px;font-size:18px;line-height:20px;color:#111;white-space:nowrap;text-align:justify;text-align-last:justify;">worth of the trust fund would, by</div>
<div class="a pv" style="left:9px;top:64.80000000000001px;width:305px;font-size:18px;line-height:20px;color:#111;white-space:nowrap;text-align:justify;text-align-last:justify;">means of compound interest, actu-</div>
<div class="a pv" style="left:9px;top:85.69999999999999px;width:305px;font-size:18px;line-height:20px;color:#111;white-space:nowrap;text-align:justify;text-align-last:justify;">ally, double, even triple, over the</div>
<div class="a pv" style="left:9px;top:106.60000000000002px;width:305px;font-size:18px;line-height:20px;color:#111;white-space:nowrap;text-align:justify;text-align-last:justify;">course of its lifetime. But the young</div>
<div class="a pv" style="left:9px;top:127.60000000000002px;width:305px;font-size:18px;line-height:20px;color:#111;white-space:nowrap;text-align:justify;text-align-last:justify;">idiots did not care. They could take</div>
<div class="a pv" style="left:9px;top:148.5px;width:305px;font-size:18px;line-height:20px;color:#111;white-space:nowrap;text-align:justify;text-align-last:justify;">their lump-sum small fortune (now,</div>
<div class="a pv" style="left:9px;top:169.39999999999998px;width:305px;font-size:18px;line-height:20px;color:#111;white-space:nowrap;text-align:justify;text-align-last:justify;">much smaller) and go to Boulder and</div>
<div class="a pv" style="left:9px;top:190.39999999999998px;width:305px;font-size:18px;line-height:20px;color:#111;white-space:nowrap;text-align:justify;text-align-last:justify;">become Lefty environmentalists, ride</div>
<div class="a pv" style="left:9px;top:211.3px;width:305px;font-size:18px;line-height:20px;color:#111;white-space:nowrap;text-align:justify;text-align-last:justify;">bikes, ski, protest, bitch, whatever</div>
<div class="a pv" style="left:9px;top:232.2px;width:305px;font-size:18px;line-height:20px;color:#111;white-space:nowrap;text-align:justify;text-align-last:justify;">nonproductive báizuǒ <svg width="40" height="18" style="vertical-align:-2px;display:inline-block" viewBox="0 0 40 18"><g transform="translate(0.5,0.5) scale(0.85)" fill="none" stroke="#111" stroke-width="1.53" stroke-linecap="square"><path d="M10.5 0.8 L8.5 4.2"/><path d="M4 4.5 H16 V19.2 H4 Z"/><path d="M4 11.8 H16"/></g><g transform="translate(22.5,0.5) scale(0.85)" fill="none" stroke="#111" stroke-width="1.53" stroke-linecap="square"><path d="M1.5 5.5 H18.5"/><path d="M9 0.8 C8.5 9 6 14.5 1.2 19.2"/><path d="M7.5 11 H16.5"/><path d="M12 11 V18.8"/><path d="M5.5 18.8 H19"/></g></svg> ('white-</div>
<div class="a pv" style="left:9px;top:253.2px;width:305px;font-size:18px;line-height:20px;color:#111;white-space:nowrap;text-align:justify;text-align-last:justify;">left') Caucasian idiots did all day long.</div>
<div class="a pv" style="left:9px;top:274.1px;width:305px;font-size:18px;line-height:20px;color:#111;white-space:nowrap;text-align:justify;text-align-last:justify;">Jim kept a pink pussy hat on the</div>
<div class="a pv" style="left:9px;top:295.0px;width:305px;font-size:18px;line-height:20px;color:#111;white-space:nowrap;text-align:justify;text-align-last:justify;">book shelf to remind himself how</div>
<div class="a pv" style="left:9px;top:316.0px;width:305px;font-size:18px;line-height:20px;color:#111;white-space:nowrap;">dumb his clients were.</div>
<div class="a" style="left:8px;top:355px;width:306px;height:200px;background:#f0e68c;border:2px solid #111;border-radius:9px"></div>
<div class="a" style="left:10px;top:363px;width:302px;text-align:center;font-size:14px;line-height:16px;font-weight:bold;color:#111"><svg width="27" height="14" style="vertical-align:-1px;display:inline-block" viewBox="0 0 27 14"><g transform="translate(0.5,0.75) scale(0.625)" fill="none" stroke="#111" stroke-width="2.72" stroke-linecap="square"><path d="M10.5 0.8 L8.5 4.2"/><path d="M4 4.5 H16 V19.2 H4 Z"/><path d="M4 11.8 H16"/></g><g transform="translate(14.0,0.75) scale(0.625)" fill="none" stroke="#111" stroke-width="2.72" stroke-linecap="square"><path d="M1.5 5.5 H18.5"/><path d="M9 0.8 C8.5 9 6 14.5 1.2 19.2"/><path d="M7.5 11 H16.5"/><path d="M12 11 V18.8"/><path d="M5.5 18.8 H19"/></g></svg></div>
<div class="a" style="left:10px;top:380px;width:302px;text-align:center;font-size:14px;line-height:16px;font-weight:bold;color:#111">báizuǒ</div>
<div class="a" style="left:10px;top:396px;width:302px;text-align:center;font-size:14px;line-height:16px;font-weight:bold;color:#111">white left</div>
<div class="a" style="left:17px;top:412px;width:290px;font-size:13.6px;line-height:16px;color:#111;white-space:nowrap">those who “only care about topics such as im-</div>
<div class="a" style="left:17px;top:428px;width:290px;font-size:13.6px;line-height:16px;color:#111;white-space:nowrap">migration, minorities, LGBT and the environ-</div>
<div class="a" style="left:17px;top:444px;width:290px;font-size:13.6px;line-height:16px;color:#111;white-space:nowrap">ment” and “have no sense of real problems in</div>
<div class="a" style="left:17px;top:460px;width:290px;font-size:13.6px;line-height:16px;color:#111;white-space:nowrap">the real world”; they are hypocritical humani-</div>
<div class="a" style="left:17px;top:476px;width:290px;font-size:13.6px;line-height:16px;color:#111;white-space:nowrap">tarians who advocate for peace and equality</div>
<div class="a" style="left:17px;top:492px;width:290px;font-size:13.6px;line-height:16px;color:#111;white-space:nowrap">only to “satisfy their own feeling of moral su-</div>
</div>
<div class="a" style="left:1587px;top:388px;width:11px;height:38px;background:#bebebe"></div>
<div class="tri up" style="left:1588px;top:244px;border-bottom-color:#555"></div>
<div class="tri dn" style="left:1588px;top:727px;border-top-color:#555"></div>
<div class="a" style="left:1267px;top:748px;width:32px;height:30px;border:1px solid #b8b8b8;border-radius:3px;background:#dcdcdc"></div>
<div class="a" style="left:1300px;top:748px;width:32px;height:30px;border:1px solid #b8b8b8;border-radius:3px;background:#dcdcdc"></div>
<svg class="a" style="left:1270px;top:751px" width="26" height="24" viewBox="0 0 26 24"><path d="M4 11 C4 6 8 3 13 3 C16 3 18 4 20 6 L22 4 V11 H15 L17.5 8.5 C16 7 15 6.5 13 6.5 C10 6.5 7.5 8.5 7.5 11Z" fill="#7ac030"/><path d="M22 13 C22 18 18 21 13 21 C10 21 8 20 6 18 L4 20 V13 H11 L8.5 15.5 C10 17 11 17.5 13 17.5 C16 17.5 18.5 15.5 18.5 13Z" fill="#2a9ad8"/></svg>
<svg class="a" style="left:1308px;top:751px" width="18" height="24" viewBox="0 0 18 24"><path d="M2 1 L16 12 L2 23Z" fill="#1ab040"/><path d="M2 1 L16 12 L2 12Z" fill="#2ad050" opacity="0.7"/></svg>
<div class="a" style="left:1337px;top:754px;width:1px;height:18px;background:#cfcfcf"></div>
<svg class="a" style="left:1346px;top:751px" width="20" height="24" viewBox="0 0 20 24"><path d="M2 1.5 H13 L17.5 6 V22.5 H2Z" fill="#fff" stroke="#2f7de1" stroke-width="1.6"/><path d="M2 12 H17.5" stroke="#2f7de1" stroke-width="1.4"/><path d="M6 9 L9.75 5 L13.5 9Z M6 15 L9.75 19 L13.5 15Z" fill="#2fb040"/></svg>
<svg class="a" style="left:1377px;top:751px" width="24" height="24" viewBox="0 0 24 24"><path d="M18 8 C16 5 14 4 11.5 4 C6.5 4 3 8 3 12.5 C3 17 6.5 21 11.5 21 C16 21 19.5 17.5 20 13" fill="none" stroke="#b040c8" stroke-width="2.2"/><path d="M13.5 1 L21 6.5 L13 9.5Z" fill="#b040c8"/></svg>
<div class="a" style="left:1410px;top:754px;width:1px;height:18px;background:#cfcfcf"></div>
<div class="a" style="left:1413px;top:751px;width:117px;height:25px;background:#fff;border:1px solid #b8b8b8;border-radius:3px"></div>
<div class="t" style="left:1417px;top:756px;font-size:13.5px;color:#888">Search in previ...</div>
<svg class="a" style="left:1535px;top:756px" width="25" height="15" viewBox="0 0 25 15"><defs><linearGradient id="gd" x1="0" y1="0" x2="0" y2="1"><stop offset="0" stop-color="#3ae060"/><stop offset="1" stop-color="#0a7a2a"/></linearGradient></defs><path d="M0.5 1 H24.5 L12.5 14Z" fill="url(#gd)"/></svg>
<svg class="a" style="left:1567px;top:756px" width="25" height="15" viewBox="0 0 25 15"><defs><linearGradient id="gu" x1="0" y1="0" x2="0" y2="1"><stop offset="0" stop-color="#0a9a3a"/><stop offset="1" stop-color="#3ae060"/></linearGradient></defs><path d="M0.5 14 H24.5 L12.5 1Z" fill="url(#gu)"/></svg>
<svg class="a" style="left:830px;top:216px" width="14" height="3" viewBox="0 0 14 3"><circle cx="1.0" cy="1.5" r="0.5" fill="#a0a0a0"/><circle cx="3.4" cy="1.5" r="0.5" fill="#a0a0a0"/><circle cx="5.8" cy="1.5" r="0.5" fill="#a0a0a0"/><circle cx="8.2" cy="1.5" r="0.5" fill="#a0a0a0"/><circle cx="10.6" cy="1.5" r="0.5" fill="#a0a0a0"/><circle cx="13.0" cy="1.5" r="0.5" fill="#a0a0a0"/></svg>
<svg class="a" style="left:830px;top:785px" width="14" height="3" viewBox="0 0 14 3"><circle cx="1.0" cy="1.5" r="0.5" fill="#a0a0a0"/><circle cx="3.4" cy="1.5" r="0.5" fill="#a0a0a0"/><circle cx="5.8" cy="1.5" r="0.5" fill="#a0a0a0"/><circle cx="8.2" cy="1.5" r="0.5" fill="#a0a0a0"/><circle cx="10.6" cy="1.5" r="0.5" fill="#a0a0a0"/><circle cx="13.0" cy="1.5" r="0.5" fill="#a0a0a0"/></svg>
<svg class="a" style="left:313px;top:495px" width="3" height="16" viewBox="0 0 3 16"><circle cx="1.5" cy="1.0" r="0.5" fill="#a0a0a0"/><circle cx="1.5" cy="3.4" r="0.5" fill="#a0a0a0"/><circle cx="1.5" cy="5.8" r="0.5" fill="#a0a0a0"/><circle cx="1.5" cy="8.2" r="0.5" fill="#a0a0a0"/><circle cx="1.5" cy="10.6" r="0.5" fill="#a0a0a0"/><circle cx="1.5" cy="13.0" r="0.5" fill="#a0a0a0"/></svg>
<svg class="a" style="left:1260px;top:495px" width="3" height="16" viewBox="0 0 3 16"><circle cx="1.5" cy="1.0" r="0.5" fill="#a0a0a0"/><circle cx="1.5" cy="3.4" r="0.5" fill="#a0a0a0"/><circle cx="1.5" cy="5.8" r="0.5" fill="#a0a0a0"/><circle cx="1.5" cy="8.2" r="0.5" fill="#a0a0a0"/><circle cx="1.5" cy="10.6" r="0.5" fill="#a0a0a0"/><circle cx="1.5" cy="13.0" r="0.5" fill="#a0a0a0"/></svg>

<!-- TOC -->
<div class="a" style="left:72px;top:787px;width:1528px;height:90px">
  <div class="t ui" style="left:5px;top:4px">Table of Contents</div>
  <div class="a dbtn" style="left:1501px;top:6px"><div class="a" style="left:3px;top:2px;width:5px;height:5px;border:1px solid #555;border-radius:1px"></div><div class="a" style="left:1px;top:4px;width:5px;height:5px;border:1px solid #555;background:#efefef;border-radius:1px"></div></div>
<div class="a dbtn" style="left:1515px;top:6px"><svg class="a" style="left:1px;top:1px" width="9" height="9"><path d="M1.5 1.5L7.5 7.5M7.5 1.5L1.5 7.5" stroke="#444" stroke-width="2"/></svg></div>
  <div class="hline" style="left:0;top:21px;width:1528px;background:#bdbdbd"></div>
  <div class="a" style="left:0;top:22px;width:1513px;height:68px;overflow:hidden">
    <div class="t ui" style="left:14px;top:6px">Chapter 14 Jim Haggarty</div>
    <div class="t ui" style="left:14px;top:33px">Chapter 15 Vegetative State</div>
    <div class="t ui" style="left:14px;top:60px">Chapter 16 Religious Input</div>
  </div>
  <div class="a vs" style="left:1513px;top:21px;width:15px;height:69px">
<div class="a vsb" style="left:0;top:0;width:13px;height:13px"><div class="tri up"></div></div>
<div class="a vsl" style="left:0;top:13px;width:13px;height:29px"></div>
<div class="a vsb" style="left:0;top:54px;width:13px;height:13px;border-bottom:none;border-top:1px solid #c6c6c6"><div class="tri dn"></div></div>
</div>
  <div class="hline" style="left:0;top:89px;width:1528px;background:#c9c9c9"></div>
</div>

<!-- STATUS -->
<div class="t ui" style="left:78px;top:882px">calibre 5.4.1 created by Kovid Goyal</div>
<div class="t" style="left:1100px;top:883px;width:497px;text-align:right;font-size:13.7px">LATIN SMALL LETTER E : Line: 33 : 64</div>

</body></html>
